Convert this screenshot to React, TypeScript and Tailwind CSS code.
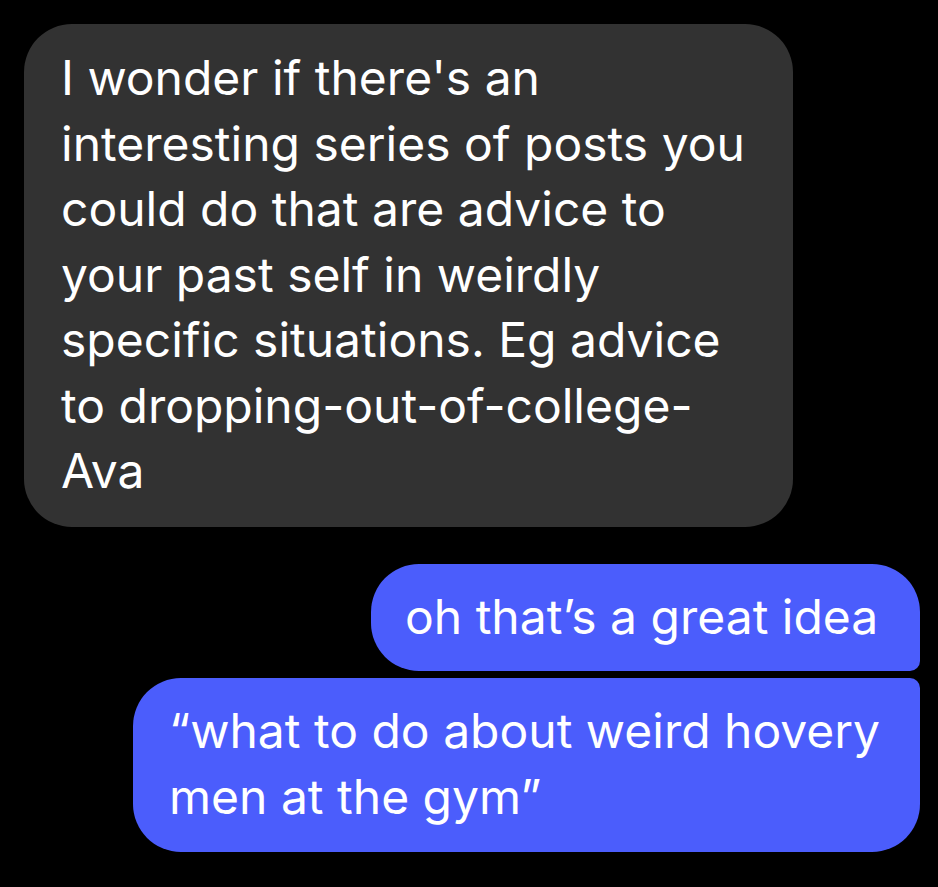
export default function App() {
  const font = { fontFamily: 'Inter, "Noto Sans", sans-serif' };
  return (
    <div className="w-[938px] h-[887px] bg-black overflow-hidden flex flex-col" style={font}>
      <div className="ml-[24px] mt-[24px] w-[769px] h-[503px] bg-[#323232] rounded-[48px] pl-[37px] pt-[21px] text-white text-[48px] leading-[65.5px]">
        <div>I wonder if there's an</div>
        <div>interesting series of posts you</div>
        <div>could do that are advice to</div>
        <div>your past self in weirdly</div>
        <div>specific situations. Eg advice</div>
        <div>to dropping-out-of-college-</div>
        <div>Ava</div>
      </div>
      <div className="mt-[37px] mr-[18px] self-end w-[549px] h-[107px] bg-[#4b5dfc] rounded-[48px] rounded-br-[10px] pl-[34px] pt-[20px] text-white text-[48px] leading-[65.5px]">
        oh that’s a great idea
      </div>
      <div className="mt-[7px] mr-[18px] self-end w-[787px] h-[174px] bg-[#4b5dfc] rounded-[48px] rounded-tr-[10px] pl-[36px] pt-[20px] text-white text-[48px] leading-[65.5px]">
        <div>“what to do about weird hovery</div>
        <div>men at the gym”</div>
      </div>
    </div>
  );
}
